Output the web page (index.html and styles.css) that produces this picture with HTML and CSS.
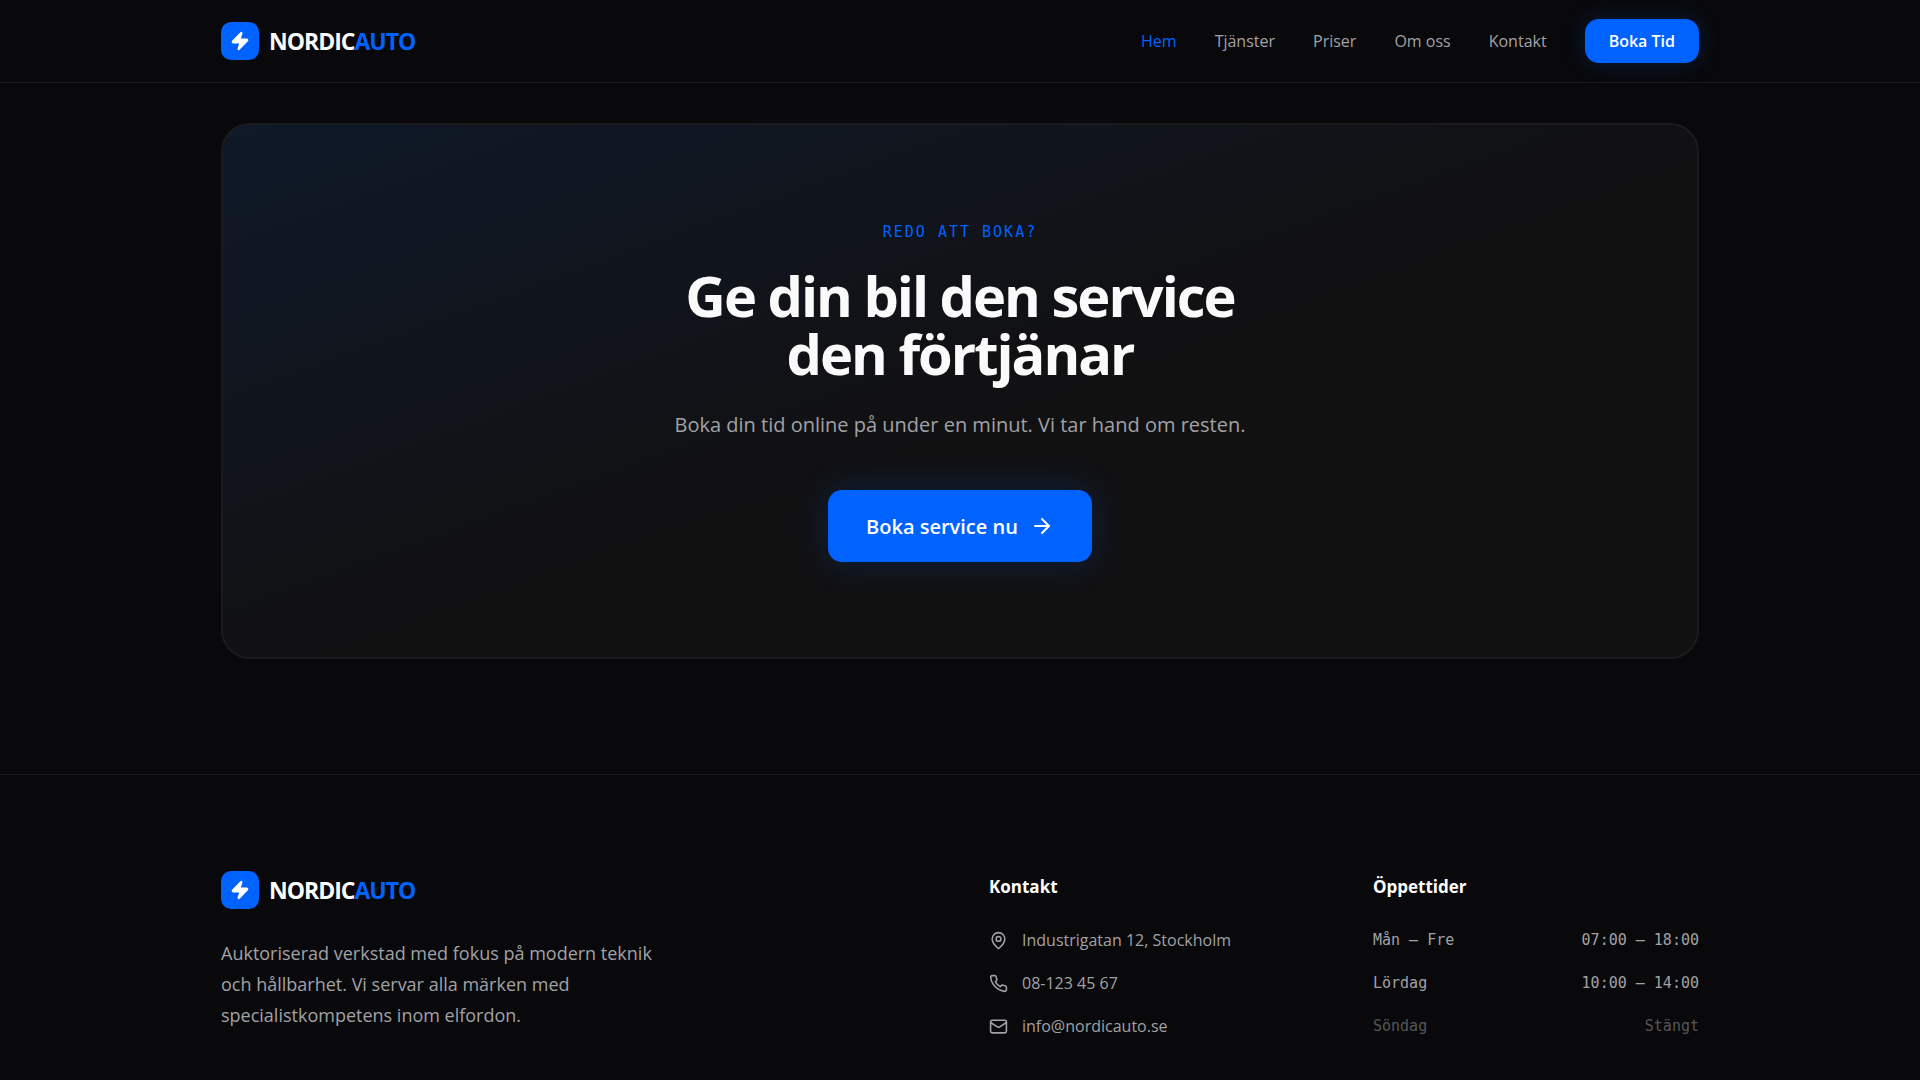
FILE: index.html
```html
<!DOCTYPE html>
<html lang="sv">
<head>
    <meta charset="UTF-8">
    <meta name="viewport" content="width=device-width, initial-scale=1.0">
    <title>NordicAuto</title>
    <link rel="stylesheet" href="styles.css">
</head>

<body>
    <header class="navbar">
        <div class="container nav-inner">
            <a href="#" class="logo">
                <span class="logo-icon">
                    <svg viewBox="0 0 24 24" fill="currentColor" stroke="currentColor" stroke-width="2" stroke-linecap="round" stroke-linejoin="round"><path d="M4 14a1 1 0 0 1-.78-1.63l9.9-10.2a.5.5 0 0 1 .86.46l-1.92 6.02A1 1 0 0 0 13 10h7a1 1 0 0 1 .78 1.63l-9.9 10.2a.5.5 0 0 1-.86-.46l1.92-6.02A1 1 0 0 0 11 14z"/></svg>
                </span>
                <span class="logo-text">NORDIC<span class="accent">AUTO</span></span>
            </a>
            <nav class="nav-links">
                <a href="#" class="active">Hem</a>
                <a href="#">Tjänster</a>
                <a href="#">Priser</a>
                <a href="#">Om oss</a>
                <a href="#">Kontakt</a>
                <button class="btn btn-small">Boka Tid</button>
            </nav>
        </div>
    </header>

    <main class="container cta-section">
        <section class="cta-card">
            <p class="cta-label">REDO ATT BOKA?</p>
            <h2>Ge din bil den service<br>den förtjänar</h2>
            <p class="cta-text">Boka din tid online på under en minut. Vi tar hand om resten.</p>
            <button class="btn btn-large">
                Boka service nu
                <svg class="icon" viewBox="0 0 24 24"><path d="M5 12h14"/><path d="m12 5 7 7-7 7"/></svg>
            </button>
        </section>
    </main>

    <footer class="footer">
        <div class="container footer-grid">
            <div class="footer-about">
                <a href="#" class="logo">
                    <span class="logo-icon">
                        <svg viewBox="0 0 24 24" fill="currentColor" stroke="currentColor" stroke-width="2" stroke-linecap="round" stroke-linejoin="round"><path d="M4 14a1 1 0 0 1-.78-1.63l9.9-10.2a.5.5 0 0 1 .86.46l-1.92 6.02A1 1 0 0 0 13 10h7a1 1 0 0 1 .78 1.63l-9.9 10.2a.5.5 0 0 1-.86-.46l1.92-6.02A1 1 0 0 0 11 14z"/></svg>
                    </span>
                    <span class="logo-text">NORDIC<span class="accent">AUTO</span></span>
                </a>
                <p>Auktoriserad verkstad med fokus på modern teknik och hållbarhet. Vi servar alla märken med specialistkompetens inom elfordon.</p>
            </div>
            <div>
                <h3>Kontakt</h3>
                <ul class="contact-list">
                    <li>
                        <svg class="icon" viewBox="0 0 24 24"><path d="M20 10c0 4.993-5.539 10.193-7.399 11.799a1 1 0 0 1-1.202 0C9.539 20.193 4 14.993 4 10a8 8 0 0 1 16 0"/><circle cx="12" cy="10" r="3"/></svg>
                        Industrigatan 12, Stockholm
                    </li>
                    <li>
                        <svg class="icon" viewBox="0 0 24 24"><path d="M22 16.92v3a2 2 0 0 1-2.18 2 19.79 19.79 0 0 1-8.63-3.07 19.5 19.5 0 0 1-6-6 19.79 19.79 0 0 1-3.07-8.67A2 2 0 0 1 4.11 2h3a2 2 0 0 1 2 1.72 12.84 12.84 0 0 0 .7 2.81 2 2 0 0 1-.45 2.11L8.09 9.91a16 16 0 0 0 6 6l1.27-1.27a2 2 0 0 1 2.11-.45 12.84 12.84 0 0 0 2.81.7A2 2 0 0 1 22 16.92z"/></svg>
                        08-123 45 67
                    </li>
                    <li>
                        <svg class="icon" viewBox="0 0 24 24"><rect x="2" y="4" width="20" height="16" rx="2"/><path d="m22 7-8.97 5.7a1.94 1.94 0 0 1-2.06 0L2 7"/></svg>
                        info@nordicauto.se
                    </li>
                </ul>
            </div>
            <div>
                <h3>Öppettider</h3>
                <table class="hours">
                    <tr><th scope="row">Mån – Fre</th><td>07:00 – 18:00</td></tr>
                    <tr><th scope="row">Lördag</th><td>10:00 – 14:00</td></tr>
                    <tr class="closed"><th scope="row">Söndag</th><td>Stängt</td></tr>
                </table>
            </div>
        </div>
    </footer>
</body>
</html>
```
FILE: styles.css
```css
* {
    box-sizing: border-box;
    margin: 0;
    padding: 0;
}

body {
    font-family: 'Segoe UI', 'Open Sans', sans-serif;
    background-color: #09090b;
    color: #fafafa;
    font-size: 18px;
    line-height: 31px;
    overflow-x: hidden;
}

a {
    color: inherit;
    text-decoration: none;
}

.container {
    max-width: 1536px;
    margin: 0 auto;
    padding: 0 29px;
}

.icon {
    width: 19px;
    height: 19px;
    flex-shrink: 0;
    fill: none;
    stroke: currentColor;
    stroke-width: 2;
    stroke-linecap: round;
    stroke-linejoin: round;
}

.accent {
    color: #0062ff;
}

/* Navbar */
.navbar {
    border-bottom: 1px solid #1c1c1e;
}

.nav-inner {
    display: flex;
    justify-content: space-between;
    align-items: center;
    height: 82px;
}

.logo {
    display: flex;
    align-items: center;
    gap: 10px;
}

.logo-icon {
    display: flex;
    align-items: center;
    justify-content: center;
    width: 38px;
    height: 38px;
    border-radius: 10px;
    color: #fff;
    background-color: #0062ff;
}

.logo-icon svg {
    width: 20px;
    height: 20px;
}

.logo-text {
    font-size: 23px;
    font-weight: 700;
    letter-spacing: -1px;
}

.nav-links {
    display: flex;
    align-items: center;
    gap: 38px;
    font-size: 16px;
    font-weight: 500;
    color: #a1a1a6;
}

.nav-links .active {
    color: #0062ff;
}

.btn {
    display: inline-flex;
    align-items: center;
    font-family: inherit;
    font-weight: 600;
    color: #fff;
    background-color: #0062ff;
    border: none;
    cursor: pointer;
}

.btn:hover {
    background-color: #1a72ff;
}

.btn-small {
    font-size: 16px;
    height: 44px;
    padding: 0 24px;
    border-radius: 14px;
    box-shadow: 0 0 24px rgba(0, 98, 255, 0.2);
}

.btn-large {
    font-size: 20px;
    height: 72px;
    padding: 0 38px;
    gap: 12px;
    border-radius: 14px;
    box-shadow: 0 0 36px rgba(0, 98, 255, 0.2);
}

.btn-large .icon {
    width: 24px;
    height: 24px;
}

/* Call to action */
.cta-section {
    padding-top: 40px;
    padding-bottom: 115px;
}

.cta-card {
    padding: 95px 29px;
    text-align: center;
    border: 2px solid #1b1b1d;
    border-radius: 29px;
    background: linear-gradient(to bottom right, #0f1929, #111113 50%, #111111) border-box;
}

.cta-label {
    font-family: Consolas, 'DejaVu Sans Mono', monospace;
    font-size: 15px;
    line-height: 24px;
    letter-spacing: 2px;
    color: #0062ff;
    margin-bottom: 22px;
}

.cta-card h2 {
    font-size: 56px;
    line-height: 58px;
    font-weight: 700;
    letter-spacing: -2px;
    margin-bottom: 26px;
}

.cta-text {
    font-size: 20px;
    line-height: 34px;
    color: #a1a1a6;
    margin-bottom: 48px;
}

/* Footer */
.footer {
    border-top: 1px solid #1c1c1e;
    padding: 96px 0 58px;
    color: #a1a1a6;
}

.footer-grid {
    display: grid;
    grid-template-columns: repeat(4, 1fr);
    column-gap: 58px;
}

.footer-about {
    grid-column: span 2;
}

.footer-about p {
    max-width: 460px;
    margin-top: 29px;
}

.footer .logo-text,
.footer h3 {
    color: #fff;
}

.footer .accent {
    color: #0062ff;
}

.footer h3 {
    font-size: 17px;
    line-height: 31px;
    font-weight: 700;
    margin-bottom: 24px;
}

.contact-list {
    display: flex;
    flex-direction: column;
    gap: 14px;
    list-style: none;
    font-size: 16px;
    line-height: 29px;
}

.contact-list li {
    display: flex;
    align-items: center;
    gap: 14px;
}

.hours {
    width: 100%;
    border-collapse: collapse;
    font-family: Consolas, 'DejaVu Sans Mono', monospace;
    font-size: 15px;
    line-height: 29px;
}

.hours th {
    text-align: left;
    font-weight: 400;
    padding-bottom: 14px;
}

.hours td {
    text-align: right;
    padding-bottom: 14px;
}

.hours .closed {
    color: #55555a;
}
```
